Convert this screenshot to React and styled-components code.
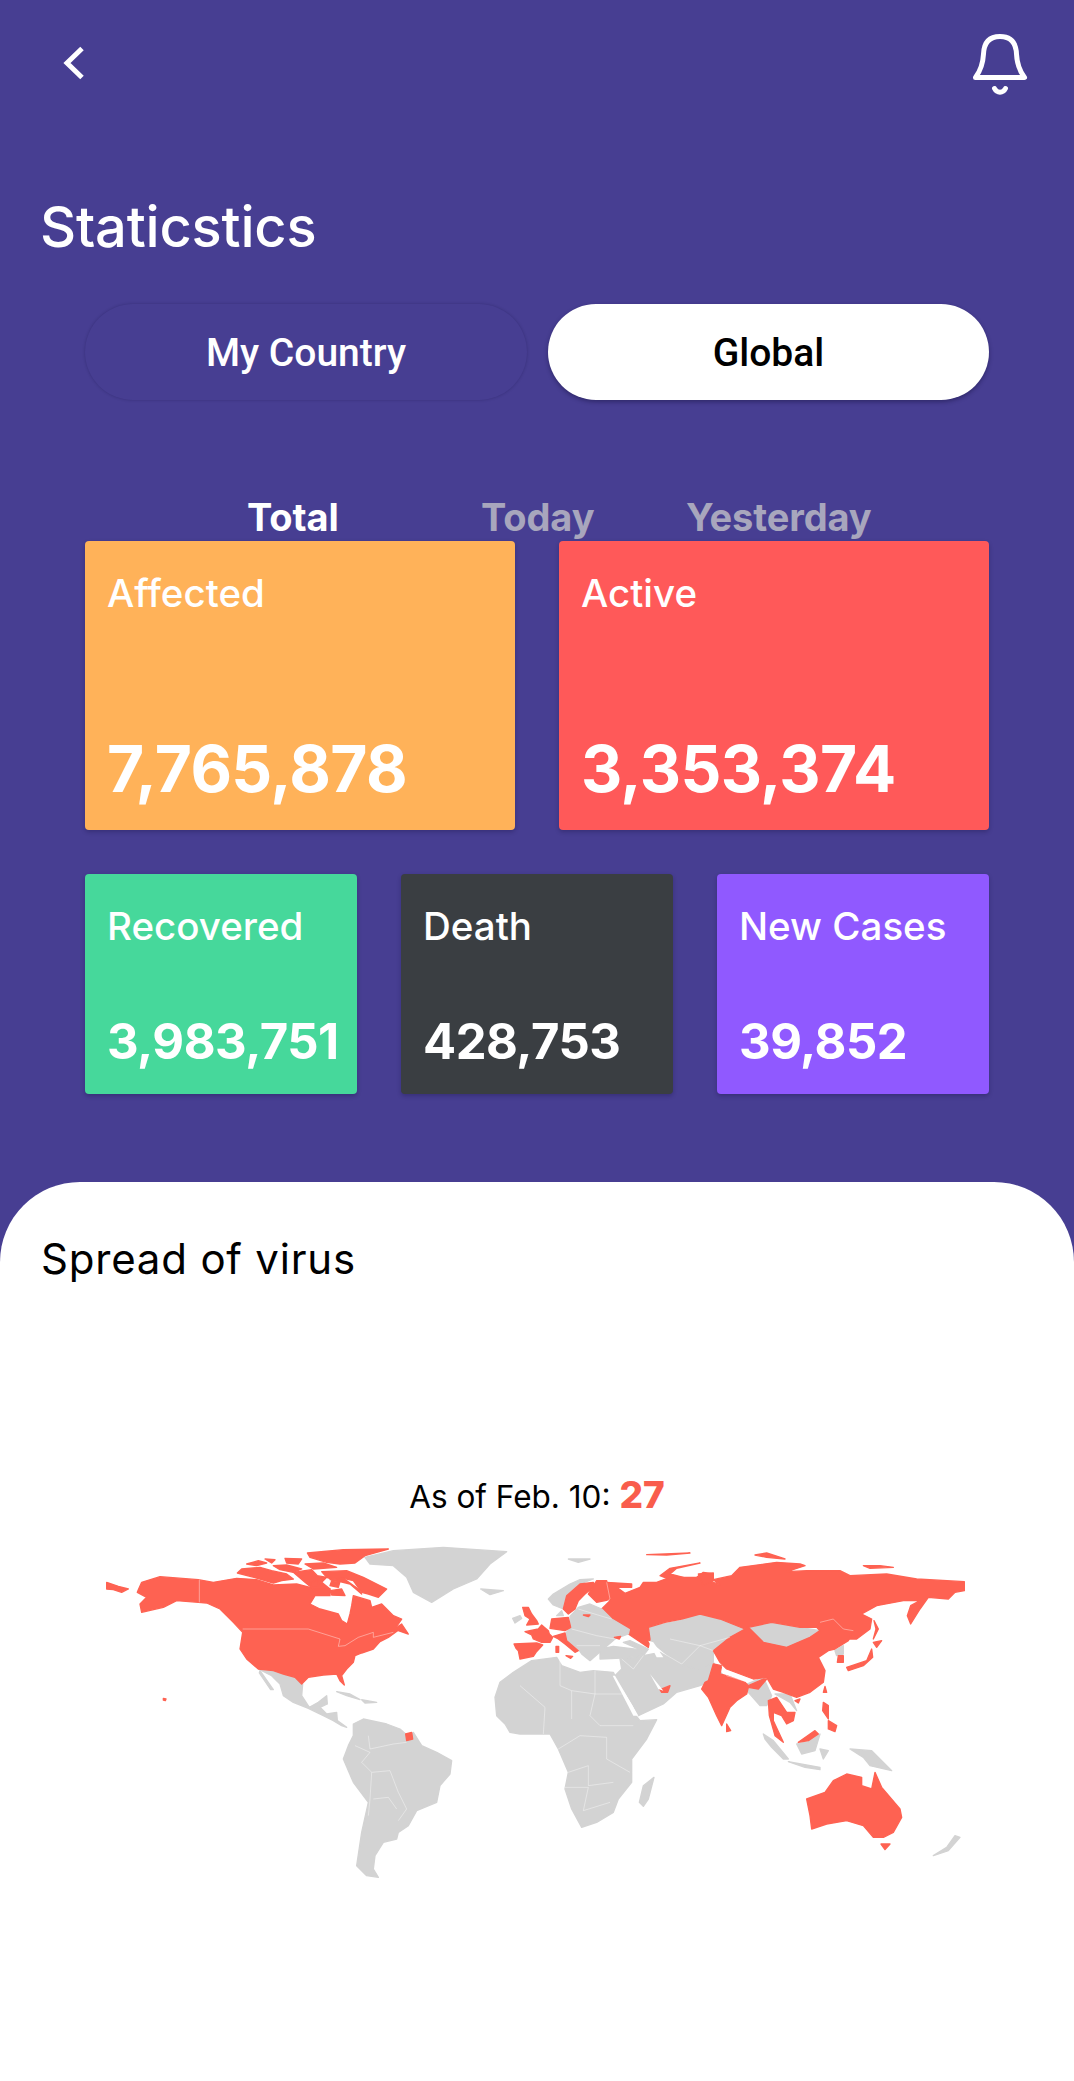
import React from "react";
import styled, { createGlobalStyle } from "styled-components";

const Global = createGlobalStyle`
  html, body { margin: 0; padding: 0; background: #473e92; }
  * { box-sizing: border-box; }
`;

const Page = styled.div`
  width: 1074px;
  height: 2081px;
  display: flex;
  flex-direction: column;
  background: #473e92;
  font-family: Inter, "Noto Sans", sans-serif;
  overflow: hidden;
`;
const TopBar = styled.header`
  height: 96px;
  padding: 34px 44px 0 63px;
  display: flex;
  justify-content: space-between;
  align-items: flex-start;
`;
const IconButton = styled.button`
  border: 0;
  padding: 0;
  background: none;
  display: block;
  margin-top: ${p => p.$top || 0}px;
`;
const Title = styled.h1`
  margin: 94px 0 0 40px;
  font-size: 56px;
  line-height: 74px;
  font-weight: 500;
  color: #fff;
  letter-spacing: -0.2px;
`;
const Segments = styled.div`
  margin: 40px 85px 0;
  display: grid;
  grid-template-columns: 442px 441px;
  gap: 21px;
`;
const Segment = styled.button`
  height: 96px;
  padding-top: 3px;
  border-radius: 48px;
  border: 0;
  font-family: Roboto, sans-serif;
  font-weight: 500;
  font-size: 39px;
  color: ${p => (p.$active ? "#000" : "#fff")};
  background: ${p => (p.$active ? "#fff" : "#473e92")};
  box-shadow: ${p => (p.$active ? "0 2px 4px rgba(20,15,60,.45)" : "0 0 3px rgba(20,15,60,.3)")};
`;
const Tabs = styled.nav`
  margin: 94px 0 0 247px;
  height: 47px;
  display: flex;
  align-items: center;
`;
const Tab = styled.span`
  width: ${p => p.$w}px;
  font-size: 38px;
  font-weight: 700;
  line-height: 47px;
  letter-spacing: -0.1px;
  color: ${p => (p.$active ? "#fff" : "#a8a6bd")};
`;
const CardRow = styled.div`
  margin: ${p => p.$gap}px 85px 0;
  display: grid;
  grid-template-columns: repeat(${p => p.$cols}, 1fr);
  column-gap: 44px;
`;
const Card = styled.div`
  height: ${p => p.$h}px;
  padding: 29px 0 ${p => (p.$big ? "25px" : "23px")} 22px;
  border-radius: 4px;
  background: ${p => p.$bg};
  box-shadow: 0 2px 4px rgba(20, 15, 60, 0.3);
  color: #fff;
  display: flex;
  flex-direction: column;
  justify-content: space-between;
`;
const CardLabel = styled.div`
  font-size: 38.5px;
  line-height: 46px;
  font-weight: 500;
  white-space: nowrap;
`;
const CardValue = styled.div`
  font-size: ${p => (p.$big ? "64px" : "49px")};
  line-height: ${p => (p.$big ? "72px" : "58px")};
  font-weight: 700;
  white-space: nowrap;
  letter-spacing: ${p => (p.$big ? "-0.6px" : "-0.5px")};
`;
const Sheet = styled.section`
  margin-top: 88px;
  flex: 1;
  background: #fff;
  border-radius: 80px 80px 0 0;
  padding-top: 50px;
`;
const SheetTitle = styled.h2`
  margin: 0 0 0 41px;
  font-size: 42px;
  line-height: 54px;
  font-weight: 400;
  color: #000;
  letter-spacing: 0.8px;
`;
const AsOf = styled.p`
  margin: 187px 0 0;
  height: 44px;
  font-size: 31.5px;
  line-height: 44px;
  text-align: center;
  color: #000;
`;
const Count = styled.strong`
  font-size: 37px;
  font-weight: 800;
  color: #f95d4c;
`;
const MapSvg = styled.svg`
  display: block;
  margin-top: 15px;
`;

const RED = "#fe6252";
const GREY = "#d3d3d3";

/* Americas, in the frame of the left part of the map */
const redL = [
  "M235,422 L245,400 L300,383 L415,392 L460,400 L530,388 L590,392 L640,408 L710,405 L750,415 L810,420 L810,440 L765,440 L750,465 L780,480 L835,495 L845,515 L862,525 L870,495 L875,470 L880,440 L930,455 L935,475 L965,465 L1000,500 L1025,510 L1010,532 L1020,540 L985,565 L960,578 L940,600 L905,612 L885,620 L880,640 L860,660 L845,680 L853,708 L840,695 L830,675 L790,678 L745,685 L725,705 L705,685 L670,675 L640,665 L595,660 L560,630 L540,600 L548,550 L520,520 L480,480 L440,462 L415,460 L350,455 L310,475 L245,490 L240,465 L260,445 L232,430 Z",
  "M140,400 L175,412 L205,420 L185,430 L160,422 L140,420 Z",
  "M1037,855 L1055,850 L1058,870 L1040,875 Z",
  "M310,748 L318,750 L316,755 L310,753 Z",
];
/* Canadian Arctic, in the frame of a closer crop */
const arctic = [
  "M22,102 L35,90 L90,85 L125,95 L170,105 L190,120 L155,125 L130,132 L90,120 L60,112 Z",
  "M50,75 L85,65 L110,72 L80,80 Z",
  "M105,60 L135,62 L125,72 Z",
  "M165,58 L215,60 L205,75 L170,72 Z",
  "M130,80 L170,78 L215,90 L190,100 L150,92 Z",
  "M232,42 L340,32 L475,30 L405,50 L375,72 L330,75 L290,70 L240,55 Z",
  "M225,75 L280,72 L320,85 L250,90 Z",
  "M190,100 L245,92 L262,110 L290,115 L275,130 L300,150 L250,150 L225,130 Z",
  "M275,98 L350,95 L400,115 L470,150 L445,175 L415,165 L395,160 L370,125 L340,118 L305,120 L290,115 Z",
  "M300,122 L340,118 L385,150 L395,165 L360,135 L330,128 Z",
  "M305,125 L330,128 L325,145 L300,140 Z",
  "M300,155 L335,150 L345,170 L305,168 Z",
  "M240,130 L262,125 L270,145 L245,145 Z",
  "M505,262 L515,255 L535,285 L505,275 Z",
];
const greyL = [
  "M915,325 L1000,305 L1150,295 L1340,308 L1290,345 L1250,390 L1180,420 L1115,460 L1060,430 L1040,385 L1000,350 L930,345 Z",
  "M1262,420 L1330,425 L1290,437 Z",
  "M595,660 L640,665 L670,675 L705,685 L728,705 L725,740 L748,775 L775,760 L800,740 L802,765 L780,775 L800,795 L830,790 L832,815 L860,835 L845,830 L820,815 L790,800 L745,778 L700,760 L670,740 L660,705 L635,680 Z",
  "M600,665 L640,722 L632,722 L598,672 Z",
  "M830,728 L870,735 L900,752 L860,740 Z",
  "M905,752 L950,760 L915,762 Z",
  "M880,825 L910,810 L980,825 L1020,840 L1037,855 L1040,875 L1060,850 L1085,890 L1130,910 L1175,935 L1170,975 L1140,1010 L1130,1060 L1070,1085 L1045,1130 L1015,1150 L1010,1170 L970,1180 L945,1220 L940,1260 L955,1285 L920,1280 L890,1250 L905,1150 L925,1060 L880,1000 L850,930 L865,890 L880,860 Z",
];
const linesL = [
  "M418,392 L418,460",
  "M548,540 L745,540 L840,570 L835,592 L855,590 L895,565 L940,550 L940,565 L1000,550",
  "M885,890 L930,910 L905,940 L935,970 L930,1050 L925,1100",
  "M925,860 L930,900 L1000,885 L1040,880",
  "M935,970 L990,965 L1015,1030 L1040,1080 L1015,1115",
  "M940,1050 L985,1045 L1010,1080",
];

/* Eurasia and Oceania, in the frame of the right part of the map */
const redR = [
  "M305,480 L330,455 L320,400 L395,405 L395,415 L350,415 L375,433 L420,415 L430,400 L470,400 L510,385 L590,385 L610,370 L640,375 L635,398 L660,408 L640,392 L695,380 L720,355 L830,340 L900,345 L915,350 L860,368 L920,365 L1020,365 L1050,380 L1160,375 L1250,390 L1393,398 L1393,425 L1365,430 L1345,450 L1285,445 L1260,480 L1232,525 L1222,500 L1232,470 L1260,455 L1210,455 L1130,470 L1085,495 L1115,510 L1110,540 L1070,570 L1045,570 L1060,545 L1030,540 L1000,510 L960,520 L950,535 L900,535 L815,520 L745,535 L735,540 L660,510 L600,495 L545,510 L495,520 L445,535 L450,570 L445,595 L385,555 L388,540 L335,510 Z",
  "M480,380 L510,358 L600,342 L530,358 L510,375 L550,385 L505,390 Z",
  "M595,375 L640,372 L640,395 L610,410 Z",
  "M640,605 L690,565 L735,540 L745,535 L790,580 L860,595 L930,565 L960,545 L950,535 L960,520 L1000,510 L1030,540 L1060,545 L1045,575 L1005,600 L985,605 L955,625 L975,665 L970,700 L930,730 L890,745 L850,730 L820,720 L800,685 L760,690 L680,660 L660,640 Z",
  "M640,645 L665,650 L660,675 L680,680 L735,700 L745,710 L790,690 L800,690 L775,720 L745,715 L740,735 L710,755 L690,775 L665,830 L650,800 L625,745 L605,720 L615,700 L625,695 Z",
  "M680,825 L692,845 L680,848 Z",
  "M805,755 L830,745 L860,790 L885,790 L880,815 L860,825 L845,800 L820,790 L820,815 L850,880 L825,860 L808,800 Z",
  "M895,880 L945,845 L955,855 L925,875 Z",
  "M970,760 L985,770 L985,810 L968,785 Z",
  "M985,815 L1010,830 L1005,848 L985,840 Z",
  "M885,755 L900,750 L895,762 Z",
  "M975,712 L980,730 L970,730 Z",
  "M1040,655 L1100,635 L1115,600 L1118,625 L1090,650 L1045,665 Z",
  "M1120,580 L1145,575 L1130,595 Z",
  "M1122,515 L1135,540 L1120,570 L1128,540 Z",
  "M1015,620 L1030,620 L1030,640 L1012,640 Z",
  "M920,1050 L975,1030 L1000,995 L1040,975 L1085,985 L1085,1010 L1115,1020 L1125,970 L1145,1015 L1200,1080 L1205,1105 L1180,1150 L1150,1165 L1120,1165 L1090,1130 L1040,1115 L980,1125 L935,1140 L930,1100 Z",
  "M1143,1185 L1170,1185 L1155,1202 Z",
  "M765,318 L800,312 L855,330 L800,325 Z",
  "M1090,350 L1140,350 L1180,355 L1110,358 Z",
  "M440,317 L570,312 L500,318 Z",
];
/* Europe and the Gulf, in the frame of a closer crop */
const redEU = [
  "M42,255 L110,252 L128,258 L108,280 L100,292 L60,300 L55,275 L48,268 Z",
  "M75,218 L115,210 L125,198 L145,215 L148,225 L158,235 L150,250 L125,250 L100,240 L95,228 Z",
  "M155,180 L205,175 L212,205 L195,215 L150,208 Z",
  "M160,232 L195,222 L200,245 L235,275 L225,280 L195,255 L175,240 Z",
  "M168,262 L176,262 L176,280 L168,280 Z",
  "M198,290 L218,292 L212,298 Z",
  "M68,145 L85,145 L95,165 L110,185 L115,195 L80,198 L90,180 L75,170 Z",
  "M190,150 L200,110 L240,75 L280,70 L285,80 L255,105 L235,125 L225,150 L205,165 Z",
  "M265,105 L290,65 L320,65 L330,122 L290,130 Z",
  "M250,168 L270,168 L265,173 Z",
  "M343,235 L362,232 L358,240 Z",
  "M480,392 L510,380 L503,400 L485,400 Z",
];
const greyEU = [
  "M38,178 L60,170 L65,178 L45,192 Z",
  "M145,120 L160,105 L210,75 L240,62 L280,60 L240,75 L200,110 L190,150 L160,138 Z",
  "M170,170 L185,155 L190,170 Z",
  "M210,172 L235,145 L270,135 L305,150 L335,180 L388,212 L385,225 L345,240 L310,270 L270,305 L245,285 L235,270 L200,245 L198,222 L212,205 Z",
  "M300,270 L340,262 L420,272 L430,290 L365,297 L300,300 Z",
  "M370,250 L390,245 L445,270 L430,290 L420,272 Z",
  "M205,0 L270,0 L235,10 Z",
];
const greyR = [
  "M-15,745 L0,700 L40,670 L95,635 L170,625 L185,650 L240,670 L280,665 L340,670 L365,720 L400,790 L420,815 L470,812 L440,870 L395,930 L395,1000 L355,1050 L340,1090 L290,1120 L245,1135 L215,1080 L195,1020 L205,970 L175,900 L150,855 L60,855 L30,850 L15,825 L-10,800 Z",
  "M462,985 L445,1050 L430,1072 L418,1060 L430,1010 Z",
  "M360,630 L430,620 L480,610 L545,645 L600,660 L640,640 L670,680 L600,710 L530,730 L490,765 L415,800 L400,770 L345,680 L365,660 Z",
  "M440,535 L540,515 L600,495 L660,510 L735,540 L690,565 L640,605 L640,640 L600,660 L540,650 L480,600 L445,570 Z",
  "M745,535 L815,520 L900,535 L960,545 L930,565 L860,595 L790,580 Z",
  "M740,705 L790,685 L815,740 L800,770 L780,770 L745,730 Z",
  "M825,735 L870,735 L890,785 L870,760 Z",
  "M1005,605 L1030,590 L1030,615 L1010,620 Z",
  "M790,855 L820,875 L865,930 L850,930 L815,895 L795,870 Z",
  "M890,885 L925,878 L960,855 L945,905 L905,915 Z",
  "M865,938 L960,955 L960,962 L915,955 Z",
  "M960,900 L985,905 L970,930 Z",
  "M1050,900 L1115,905 L1175,965 L1110,950 L1090,925 Z",
  "M1300,1220 L1340,1195 L1365,1160 L1380,1165 L1345,1205 Z",
];
const whiteR = [
  "M445,575 L470,625 L490,625 L460,580 Z",
  "M345,680 L415,800 L400,800 L338,680 Z",
  "M450,675 L490,725 L475,720 Z",
];
const linesR = [
  "M285,665 L285,735 L365,735",
  "M180,630 L180,710 L215,725 L215,810",
  "M215,725 L285,735 L270,800 L300,830 L400,830",
  "M60,710 L135,775 L130,855",
  "M175,900 L240,860 L320,865 L320,930 L390,970",
  "M205,970 L265,950 L265,1010 L340,1000",
  "M195,1015 L265,1015 L250,1085 L330,1060",
  "M485,610 L545,645 L600,590 L690,565",
  "M510,570 L600,590 L640,605",
  "M960,520 L1000,510 L1030,540 L1060,545",
  "M665,650 L680,680 L745,700",
  "M320,400 L330,450 L305,470",
  "M235,480 L300,500 L335,510",
  "M215,540 L290,560 L345,570",
  "M230,590 L300,590",
  "M365,630 L400,660 L430,620",
];

const Shapes = ({ list, fill }) =>
  list.map(d => <path key={d} d={d} fill={fill} stroke={fill} strokeWidth="4" strokeLinejoin="round" />);
const Lines = ({ list }) =>
  list.map(d => <path key={d} d={d} fill="none" stroke="#fff" strokeOpacity=".6" strokeWidth="2" />);

function WorldMap() {
  return (
    <MapSvg width="1074" height="367" viewBox="0 249 3222 1101" aria-label="World map">
      <g transform="translate(180 0)">
        <Shapes list={greyL} fill={GREY} />
        <Shapes list={redL} fill={RED} />
        <g transform="translate(510 270)">
          <Shapes list={arctic} fill={RED} />
        </g>
        <Lines list={linesL} />
      </g>
      <g transform="translate(1500 0)">
        <Shapes list={greyR} fill={GREY} />
        <Shapes list={redR} fill={RED} />
        <g transform="translate(0 330)">
          <Shapes list={greyEU} fill={GREY} />
          <Shapes list={redEU} fill={RED} />
        </g>
        {whiteR.map(d => <path key={d} d={d} fill="#fff" />)}
        <Lines list={linesR} />
      </g>
    </MapSvg>
  );
}

const top = [
  { label: "Affected", value: "7,765,878", bg: "#ffb259" },
  { label: "Active", value: "3,353,374", bg: "#ff5959" },
];
const bottom = [
  { label: "Recovered", value: "3,983,751", bg: "#46d89b" },
  { label: "Death", value: "428,753", bg: "#3a3e42" },
  { label: "New Cases", value: "39,852", bg: "#9059ff" },
];

export default function App() {
  return (
    <Page>
      <Global />
      <TopBar>
        <IconButton $top={12} aria-label="Back">
          <svg width="22" height="34" viewBox="0 0 22 34" fill="none">
            <path d="M19 2.5 L4 17 L19 31.5" stroke="#fff" strokeWidth="5" strokeLinejoin="miter" />
          </svg>
        </IconButton>
        <IconButton aria-label="Notifications">
          <svg width="60" height="62" viewBox="0 0 60 62" fill="none">
            <path
              d="M5.5 43.5 C11 36 13 30 13.5 20 C14 8 20 2.5 30 2.5 C40 2.5 46 8 46.5 20 C47 30 49 36 54.5 43.5 Z"
              stroke="#fff"
              strokeWidth="5"
              strokeLinejoin="round"
            />
            <path d="M24.5 54.5 C27 59.5 33 59.5 35.5 54.5" stroke="#fff" strokeWidth="5" strokeLinecap="round" />
          </svg>
        </IconButton>
      </TopBar>
      <Title>Staticstics</Title>
      <Segments>
        <Segment>My Country</Segment>
        <Segment $active>Global</Segment>
      </Segments>
      <Tabs>
        <Tab $active $w={234}>Total</Tab>
        <Tab $w={205}>Today</Tab>
        <Tab $w={200}>Yesterday</Tab>
      </Tabs>
      <CardRow $cols={2} $gap={0}>
        {top.map(c => (
          <Card key={c.label} $big $h={289} $bg={c.bg}>
            <CardLabel>{c.label}</CardLabel>
            <CardValue $big>{c.value}</CardValue>
          </Card>
        ))}
      </CardRow>
      <CardRow $cols={3} $gap={44}>
        {bottom.map(c => (
          <Card key={c.label} $h={220} $bg={c.bg}>
            <CardLabel>{c.label}</CardLabel>
            <CardValue>{c.value}</CardValue>
          </Card>
        ))}
      </CardRow>
      <Sheet>
        <SheetTitle>Spread of virus</SheetTitle>
        <AsOf>As of Feb. 10: <Count>27</Count></AsOf>
        <WorldMap />
      </Sheet>
    </Page>
  );
}
